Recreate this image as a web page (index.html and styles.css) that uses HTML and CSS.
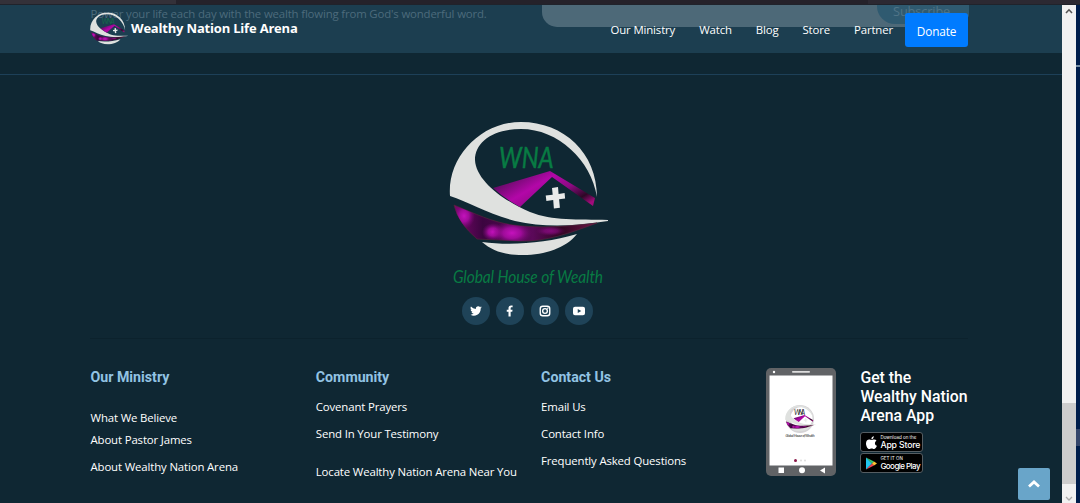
FILE: index.html
```html
<!DOCTYPE html>
<html lang="en">
<head>
<meta charset="utf-8">
<title>Wealthy Nation Life Arena</title>
<link rel="stylesheet" href="styles.css">
</head>
<body>
<svg class="defs" aria-hidden="true">
  <defs>
    <linearGradient id="roof" x1="0" y1=".2" x2="1" y2=".8"><stop offset="0" stop-color="#3b063f"/><stop offset=".16" stop-color="#700b70"/><stop offset=".4" stop-color="#b307a8"/><stop offset=".65" stop-color="#8d0a82"/><stop offset=".87" stop-color="#2c0825"/><stop offset="1" stop-color="#a10b7b"/></linearGradient>
    <radialGradient id="glow"><stop offset="0" stop-color="#c512bd"/><stop offset=".45" stop-color="#a80ca2" stop-opacity=".9"/><stop offset="1" stop-color="#7a0875" stop-opacity="0"/></radialGradient>
    <linearGradient id="wave" x1="0" x2="1"><stop offset="0" stop-color="#7a066c"/><stop offset=".2" stop-color="#3c0540"/><stop offset=".55" stop-color="#5b0959"/><stop offset=".75" stop-color="#310522"/><stop offset="1" stop-color="#6e1648"/></linearGradient>
    <clipPath id="wave-shape"><path d="M454 205C476 214 492 222 513 225C543 229 569 226 597 223C570 233 546 242 519 241L477 239Q458 223 454 205Z"/></clipPath>
    <symbol id="mark" viewBox="449 121 160 136">
      <path fill="#dfe1df" d="M450 196C447 158 480 122 521 122C564 122 597 153 597 197C591 160 558 129 521 129C493 129 475 142 475 160C476 181 504 201 530 212C553 221 577 219 608 220V221C576 226 545 228 515 221C489 214 468 202 450 196Z"/>
      <path fill="url(#roof)" d="M493 188L550 171L595 198L593 206L552 177L520 207Q505 199 493 188Z"/>
      <path fill="url(#wave)" stroke="#54213b" stroke-width=".7" d="M454 205C476 214 492 222 513 225C543 229 569 226 597 223C570 233 546 242 519 241L477 239Q458 223 454 205Z"/>
      <g clip-path="url(#wave-shape)" fill="url(#glow)"><ellipse cx="464" cy="216" rx="11" ry="13"/><ellipse cx="493" cy="232" rx="11" ry="9"/><ellipse cx="512" cy="233" rx="20" ry="12"/><ellipse cx="551" cy="231" rx="15" ry="5" opacity=".5"/></g>
      <path fill="#dfe1df" d="M482 242C512 246 546 243 577 234C566 248 545 255 523 255C505 255 492 251 482 242Z"/>
      <path fill="#e9ebea" d="M552 188l6-1 .6 7 6-1 .5 5.5-6 .8.8 8.5-6 .8-.7-8.500-6.800 1-.7-5.500 7-.9z"/>
    </symbol>
  </defs>
</svg>
<div class="window-top"></div>
<div class="window">
  <div class="site">
    <header class="navbar">
      <div class="under">
        <p class="under-text">Power your life each day with the wealth flowing from God's wonderful word.</p>
        <div class="under-field"><span class="under-button">Subscribe</span></div>
      </div>
      <a class="brand"><svg class="brand-mark" viewBox="449 121 160 136"><use href="#mark" x="449" y="121" width="160" height="136"/><text x="499" y="168" class="brand-letters" textLength="54">WNA</text></svg><span class="brand-name">Wealthy Nation Life Arena</span></a>
      <nav class="menu"><a>Our Ministry</a><a>Watch</a><a>Blog</a><a>Store</a><a>Partner</a><a class="donate">Donate</a></nav>
    </header>
    <main class="footer">
      <section class="identity">
        <svg class="logo" width="164" height="176" viewBox="447 119 164 176">
          <use href="#mark" x="449" y="121" width="160" height="136"/>
          <text class="logo-letters" transform="translate(499 168) scale(.8 1)" textLength="68" lengthAdjust="spacingAndGlyphs">WNA</text>
          <text class="logo-tagline" x="453" y="283" textLength="150" lengthAdjust="spacingAndGlyphs">Global House of Wealth</text>
        </svg>
        <div class="social">
          <a><svg viewBox="0 0 24 24"><path d="M23.600 4.600c-.9.4-1.800.6-2.700.8a4.800 4.800 0 0 0 2.100-2.700c-.9.6-1.900 1-3 1.200a4.800 4.800 0 0 0-8.200 4.300A13.500 13.500 0 0 1 1.900 3.200a4.800 4.800 0 0 0 1.500 6.400c-.8 0-1.500-.2-2.200-.6a4.800 4.800 0 0 0 3.800 4.800c-.7.2-1.400.2-2.100.1a4.800 4.800 0 0 0 4.500 3.300A9.600 9.600 0 0 1 .4 19.200a13.500 13.500 0 0 0 20.900-12c.9-.7 1.700-1.600 2.300-2.600z"/></svg></a>
          <a><svg viewBox="0 0 24 24"><path d="M9 23V13.500H5.500v-4H9V6.300C9 2.800 11 1 14.200 1c1.600 0 3 .2 3 .2v3.500h-1.700c-1.700 0-2.200 1-2.200 2.100v2.700h3.800l-.6 4h-3.200V23z"/></svg></a>
          <a><svg viewBox="0 0 24 24"><g fill="none" stroke="#fff" stroke-width="2.700"><rect x="2.500" y="2.500" width="19" height="19" rx="5"/><circle cx="12" cy="12" r="4.700"/></g><circle cx="17.500" cy="6.500" r="1.400"/></svg></a>
          <a><svg viewBox="0 0 24 24"><path fill-rule="evenodd" d="M4 3.500h16q4 0 4 4v9q0 4-4 4H4q-4 0-4-4v-9q0-4 4-4zM9.500 8v8l7-4z"/></svg></a>
        </div>
      </section>
      <section class="columns">
        <div class="column ministry"><h4>Our Ministry</h4><a>What We Believe</a><a>About Pastor James</a><a>About Wealthy Nation Arena</a></div>
        <div class="column community"><h4>Community</h4><a>Covenant Prayers</a><a>Send In Your Testimony</a><a>Locate Wealthy Nation Arena Near You</a></div>
        <div class="column contact"><h4>Contact Us</h4><a>Email Us</a><a>Contact Info</a><a>Frequently Asked Questions</a></div>
        <div class="app">
          <svg class="phone" width="70" height="109" viewBox="0 0 70 109">
            <rect width="70" height="108" rx="5" fill="#616366"/><rect x="3.500" y="7.500" width="63" height="90" fill="#fff"/>
            <circle cx="8" cy="4" r="1.200" fill="#fff"/><rect x="26" y="3" width="18" height="1.800" rx=".8" fill="#ddd"/>
            <circle cx="34" cy="51" r="14" fill="#d5d3d6"/><circle cx="35.500" cy="50" r="11" fill="#fff"/>
            <use href="#mark" x="19" y="36" width="31" height="29"/>
            <text class="phone-letters" x="28" y="47" textLength="11">WNA</text>
            <text class="phone-tagline" x="19.500" y="68.500" textLength="29">Global House of Wealth</text>
            <circle cx="29.500" cy="92.500" r="1.500" fill="#8b1747"/><circle cx="35" cy="92.500" r="1" fill="#ddd"/><circle cx="39" cy="92.500" r="1" fill="#ddd"/>
            <path fill="#fff" d="M12.500 99.500h5.500v5.500h-5.500zM59 99.500v6l-5-3z"/><circle cx="36" cy="102.300" r="3" fill="#fff"/>
          </svg>
          <div class="app-info">
            <h3>Get the<br>Wealthy Nation<br>Arena App</h3>
            <a class="store"><svg width="11" height="13" viewBox="0 0 22 26"><path fill="#fff" d="M15.500 0q.3 3.500-1.800 5.400Q12.200 7 10.500 6.700q0-4.800 5-6.700zM11 8c1.500 0 3-1.300 5.500-1.200 2 .1 3.500 1 4.500 2.500-4.500 3-4 8.500.9 10.400C20.500 23.500 18.500 26 16 26c-1.800 0-2.400-1-4.700-1S8.400 26 6.700 26C3 26 0 19.500 0 14.800 0 9.500 3 6.800 6.300 6.800 8.300 6.800 10 8 11 8z"/></svg><span><small>Download on the</small><b>App Store</b></span></a>
            <a class="store play"><svg width="11" height="13" viewBox="0 0 22 26"><path fill="#21c4ed" d="M0 1v24l12-12z"/><path fill="#37c673" d="M0 1l16 8-4 4z"/><path fill="#ed4557" d="M0 25l16-8-4-4z"/><path fill="#ffc634" d="M16 9l6 4-6 4-4-4z"/></svg><span><small>GET IT ON</small><b>Google Play</b></span></a>
          </div>
        </div>
      </section>
      <a class="to-top"><svg width="14" height="10" viewBox="0 0 14 10"><path fill="none" stroke="#fff" stroke-width="2.800" d="M2 7.500L7 3l5 4.500"/></svg></a>
    </main>
  </div>
  <div class="scrollbar">
    <svg width="8" height="6" viewBox="0 0 8 6"><path fill="none" stroke="#555" stroke-width="1.600" d="M1 5l3-3.200L7 5"/></svg>
    <div class="thumb"></div>
    <svg width="8" height="6" viewBox="0 0 8 6"><path fill="none" stroke="#aaa" stroke-width="1.300" d="M1 1l3 3 3-3"/></svg>
  </div>
  <div class="edge"><i class="edge-line"></i><i class="edge-block"></i></div>
</div>
</body>
</html>
```
FILE: styles.css
```css
* { box-sizing: border-box; }
body { margin: 0; width: 1080px; height: 503px; overflow: hidden; background: #0f2733; font: 11.400px/18px "Open Sans", sans-serif; letter-spacing: -.14px; color: #fff; }
.defs { position: absolute; width: 0; height: 0; }
.window-top { height: 5px; background: linear-gradient(90deg, #343139 0 176px, #25222a 176px 868px, #2c2932 868px); border-bottom: 1px solid #20232b; }
.window { display: flex; height: 498px; }
.site { width: 1062px; display: flex; flex-direction: column; }
.navbar { position: relative; height: 48px; flex: none; padding: 0 94px 0 90px; display: flex; align-items: flex-start; justify-content: space-between; background: #1c3e50; overflow: hidden; }
.under { position: absolute; inset: 0; }
.under-text { position: absolute; left: 90.500px; top: 0; margin: 0; font-size: 11.400px; line-height: 18px; letter-spacing: -.16px; color: #4c6b7c; white-space: nowrap; }
.under-field { position: absolute; left: 542px; top: -20px; width: 427px; height: 42px; border-radius: 15px; background: #4d6978; overflow: hidden; }
.under-button { position: absolute; right: 0; top: 0; width: 92px; height: 39px; padding: 17px 0 0 16px; border-radius: 0 0 0 18px; background: #2f5a70; color: #4f7487; font-size: 12.800px; line-height: 18px; }
.brand { position: relative; display: flex; gap: 3px; padding-top: 7px; }
.brand-mark { width: 38px; height: 33px; }
.brand-letters { font: italic 28px "Lato", sans-serif; fill: #176c4b; }
.brand-name { padding-top: 7px; font-size: 13px; font-weight: 700; letter-spacing: -.19px; line-height: 18px; }
.menu { position: relative; display: flex; gap: 24px; padding-top: 8px; line-height: 34px; }
.menu .donate { width: 63px; height: 34px; margin-left: -12px; border-radius: 3px; background: #007bff; text-align: center; font-size: 11.800px; line-height: 36px; }
.footer { position: relative; flex: 1; margin-top: 21px; border-top: 1px solid #1d4058; }
.identity { display: flex; flex-direction: column; align-items: center; height: 264px; padding-top: 44px; border-bottom: 1px solid #0c222d; margin: 0 94px 0 90px; }
.logo { flex: none; overflow: visible; }
.logo-letters { font: italic 29px "Lato", sans-serif; fill: #087b43; stroke: #087b43; stroke-width: .5; }
.logo-tagline { font: italic 18px "Lato", sans-serif; fill: #087b43; }
.social { display: flex; gap: 6.500px; margin: 2px 3px 0 0; }
.social a { width: 28px; height: 28px; border-radius: 50%; background: #1f4358; display: flex; align-items: center; justify-content: center; }
.social svg { width: 12px; height: 12px; fill: #fff; }
.columns { display: flex; padding: 28px 0 0 90.500px; }
.column { width: 225.300px; display: flex; flex-direction: column; align-items: flex-start; white-space: nowrap; }
h4 { margin: 0 0 11px; font: 700 14.200px/20px Roboto, sans-serif; letter-spacing: 0; color: #92c3e3; }
.column a { line-height: 18px; margin-bottom: 9px; }
.ministry h4 { margin-bottom: 22px; }
.ministry a:nth-of-type(1) { margin-bottom: 4px; }
.community a:nth-of-type(2) { margin-bottom: 20px; }
.app { display: flex; gap: 24px; }
.phone { flex: none; margin-top: 1px; }
.phone-letters { font: italic 7px "Lato", sans-serif; fill: #333; }
.phone-tagline { font: italic 3.500px "Lato", sans-serif; fill: #222; }
.app-info { padding-top: 1px; }
h3 { margin: 0 0 7px; font: 500 15.800px/19px Roboto, sans-serif; letter-spacing: 0; white-space: nowrap; }
.store { width: 63px; height: 20px; margin-bottom: 1px; display: flex; align-items: center; gap: 3px; padding-left: 5px; background: #000; border: 1px solid #555d62; border-radius: 3px; white-space: nowrap; }
.store span { display: flex; flex-direction: column; }
.store small { font: 4.500px/6px "Inter", sans-serif; letter-spacing: 0; }
.store b { font: 500 8.700px/9px "Inter", sans-serif; letter-spacing: -.15px; }
.store.play b { font-size: 8px; letter-spacing: -.55px; }
.to-top { position: absolute; left: 1018px; top: 393px; width: 32px; height: 32px; border-radius: 2px; background: #69a5c9; display: flex; align-items: center; justify-content: center; }
.scrollbar { width: 14px; background: #f1f1f1; display: flex; flex-direction: column; align-items: center; padding-top: 3px; }
.thumb { width: 14px; height: 81px; margin: 389px 0 12px; background: #cdcdcd; }
.edge { width: 4px; background: #001d4b; display: flex; flex-direction: column; }
.edge-line { height: 2px; margin-top: 60px; background: #7890a8; }
.edge-block { height: 17px; margin-top: 362px; background: #35466b; }
```
